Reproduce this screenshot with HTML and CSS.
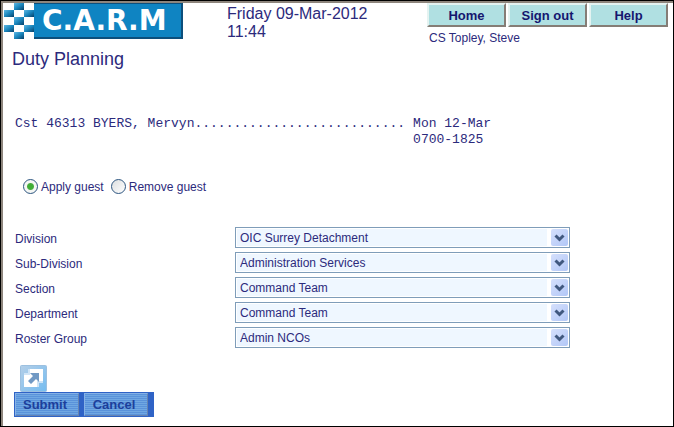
FILE: index.html
```html
<!DOCTYPE html>
<html lang="en">
<head>
<meta charset="utf-8">
<title>Duty Planning</title>
<link rel="stylesheet" href="styles.css">
</head>
<body>
<div class="window">
<header class="top">
  <svg class="logo" viewBox="0 0 180 36" role="img" aria-label="C.A.R.M">
    <defs>
      <linearGradient id="tile" x1="0" y1="0" x2="1" y2="1">
        <stop offset="0" stop-color="#5fb8e4"/>
        <stop offset=".5" stop-color="#1a86bd"/>
        <stop offset="1" stop-color="#063f68"/>
      </linearGradient>
    </defs>
    <g fill="url(#tile)">
      <rect x="11" y="0" width="10" height="7"/>
      <rect x="1" y="7" width="10" height="7"/>
      <rect x="21" y="7" width="10" height="7"/>
      <rect x="11" y="14" width="10" height="8"/>
      <rect x="1" y="22" width="10" height="7"/>
      <rect x="21" y="22" width="10" height="7"/>
      <rect x="11" y="29" width="10" height="7"/>
    </g>
    <rect x="31" y="0" width="149" height="36" fill="#0c4f7c"/>
    <rect x="31" y="1" width="147" height="33" fill="#0f84c2"/>
    <text class="logo-text" x="39" y="27">C.A.R.M</text>
  </svg>
  <time class="clock" datetime="2012-03-09T11:44">Friday 09-Mar-2012<br>11:44</time>
  <div class="session">
    <nav class="nav">
      <button type="button">Home</button>
      <button type="button">Sign out</button>
      <button type="button">Help</button>
    </nav>
    <p class="user">CS Topley, Steve</p>
  </div>
</header>
<main>
  <h1>Duty Planning</h1>
  <div class="duty">
    <span>Cst 46313 BYERS, Mervyn...........................</span>
    <span>Mon 12-Mar<br>0700-1825</span>
  </div>
  <form>
    <div class="choice">
      <input type="radio" name="guest" id="apply" checked><label for="apply">Apply guest</label>
      <input type="radio" name="guest" id="remove"><label for="remove">Remove guest</label>
    </div>
    <div class="fields">
      <label for="division">Division</label>
      <div class="pick"><select id="division"><option>OIC Surrey Detachment</option></select><svg viewBox="0 0 17 17"><path d="M4.500 6.500l4 4 4-4"/></svg></div>
      <label for="subdivision">Sub-Division</label>
      <div class="pick"><select id="subdivision"><option>Administration Services</option></select><svg viewBox="0 0 17 17"><path d="M4.500 6.500l4 4 4-4"/></svg></div>
      <label for="section">Section</label>
      <div class="pick"><select id="section"><option>Command Team</option></select><svg viewBox="0 0 17 17"><path d="M4.500 6.500l4 4 4-4"/></svg></div>
      <label for="department">Department</label>
      <div class="pick"><select id="department"><option>Command Team</option></select><svg viewBox="0 0 17 17"><path d="M4.500 6.500l4 4 4-4"/></svg></div>
      <label for="roster">Roster Group</label>
      <div class="pick"><select id="roster"><option>Admin NCOs</option></select><svg viewBox="0 0 17 17"><path d="M4.500 6.500l4 4 4-4"/></svg></div>
    </div>
    <button type="button" class="expand" aria-label="Open">
      <svg viewBox="0 0 27 27">
        <defs><linearGradient id="sky" x1="0" y1="0" x2="1" y2="1"><stop offset="0" stop-color="#b4cfe8"/><stop offset="1" stop-color="#74bcf0"/></linearGradient></defs>
        <rect x=".5" y=".5" width="26" height="26" rx="1" fill="url(#sky)" stroke="#9cc0e0"/>
        <path d="M8 4h15v14h-4v4H4V8h4z" fill="#fff"/>
        <path d="M8 4v4H4v2h6V4zM19 22v-4h4v-2h-6v6z" fill="#cfe4f6"/>
        <path d="M10 8h9v9l-3-3-5 5-3-3 5-5z" fill="#7199c4"/>
      </svg>
    </button>
    <div class="actions">
      <button type="submit">Submit</button>
      <button type="button">Cancel</button>
    </div>
  </form>
</main>
</div>
</body>
</html>
```
FILE: styles.css
```css
* { box-sizing: border-box; }

body {
  margin: 0;
  background: #fff;
  color: #2c2a7c;
  font: 12px/16px "Liberation Sans", Arial, sans-serif;
}

.window {
  min-height: 100vh;
  border: 1px solid #000;
  box-shadow: inset 2px 2px 0 #8d857c;
  padding: 2px 5px 8px 2px;
}

.top { display: flex; align-items: flex-start; }
.logo { width: 180px; height: 36px; flex: none; }
.logo-text { font: bold 28px "DejaVu Sans", sans-serif; fill: #fff; }
.clock { margin-left: 44px; padding-top: 2px; font-size: 16px; line-height: 18px; }
.session { margin-left: auto; }
.nav { display: flex; gap: 2px; }
.nav button {
  width: 79px;
  height: 24px;
  padding: 2px 0 0;
  border: 2px solid;
  border-color: #e4f3f1 #857d76 #857d76 #e4f3f1;
  background: #b0e0e2;
  color: #15166f;
  font: bold 13px/18px "Liberation Sans", Arial, sans-serif;
}
.user { margin: 3px 0 0 2px; }

main { padding: 0 8px 0 12px; }
h1 { margin: 1px 0 0 -3px; font-size: 18px; line-height: 24px; font-weight: normal; }

.duty {
  display: flex;
  gap: 8px;
  margin-top: 45px;
  font: 13px/16px "Liberation Mono", "Courier New", monospace;
}

.choice { display: flex; align-items: center; margin-top: 29px; padding-left: 8px; }
.choice input {
  appearance: none;
  width: 15px;
  height: 15px;
  margin: 0 3px 0 0;
  border: 1px solid #2d5580;
  border-radius: 50%;
  background: linear-gradient(135deg, #dcdfe0, #fff);
}
.choice input:checked { background: radial-gradient(circle, #3fae35 0 2px, #4cae42 3px, #f4f6f4 4px); }
.choice label { margin-right: 7px; padding-top: 2px; }

.fields {
  display: grid;
  grid-template-columns: 220px minmax(0, 335px);
  row-gap: 4px;
  margin-top: 32px;
}
.fields > label { padding-top: 4px; line-height: 17px; }
.pick { position: relative; height: 21px; }
.pick select {
  appearance: none;
  display: block;
  width: 100%;
  height: 21px;
  padding: 0 24px 0 4px;
  border: 1px solid #7f9db9;
  border-radius: 0;
  background: #eff7ff;
  box-shadow: inset 0 0 0 1px #fff, inset -22px 0 0 #fff;
  color: inherit;
  font: inherit;
}
.pick svg {
  position: absolute;
  top: 2px;
  right: 2px;
  width: 17px;
  height: 17px;
  border-radius: 2px;
  background: linear-gradient(135deg, #d5e0fc, #b2c7f7);
  pointer-events: none;
}
.pick path { fill: none; stroke: #40587f; stroke-width: 3; }

.expand {
  display: block;
  width: 27px;
  height: 27px;
  margin: 17px 0 0 5px;
  padding: 0;
  border: 0;
  background: none;
}
.expand svg { display: block; }

.actions {
  display: flex;
  gap: 5px;
  width: max-content;
  margin-left: -1px;
  padding: 1px 6px 1px 1px;
  background: #2f63c6;
}
.actions button {
  width: 64px;
  height: 23px;
  padding: 0 4px 0 0;
  border: 1px solid;
  border-color: #86b2e6 #6683b0 #6683b0 #86b2e6;
  background: repeating-linear-gradient(#5a92da 0 1px, #70a8e2 1px 2px);
  color: #1c3f9c;
  font: bold 13px/18px "Liberation Sans", Arial, sans-serif;
}
```
